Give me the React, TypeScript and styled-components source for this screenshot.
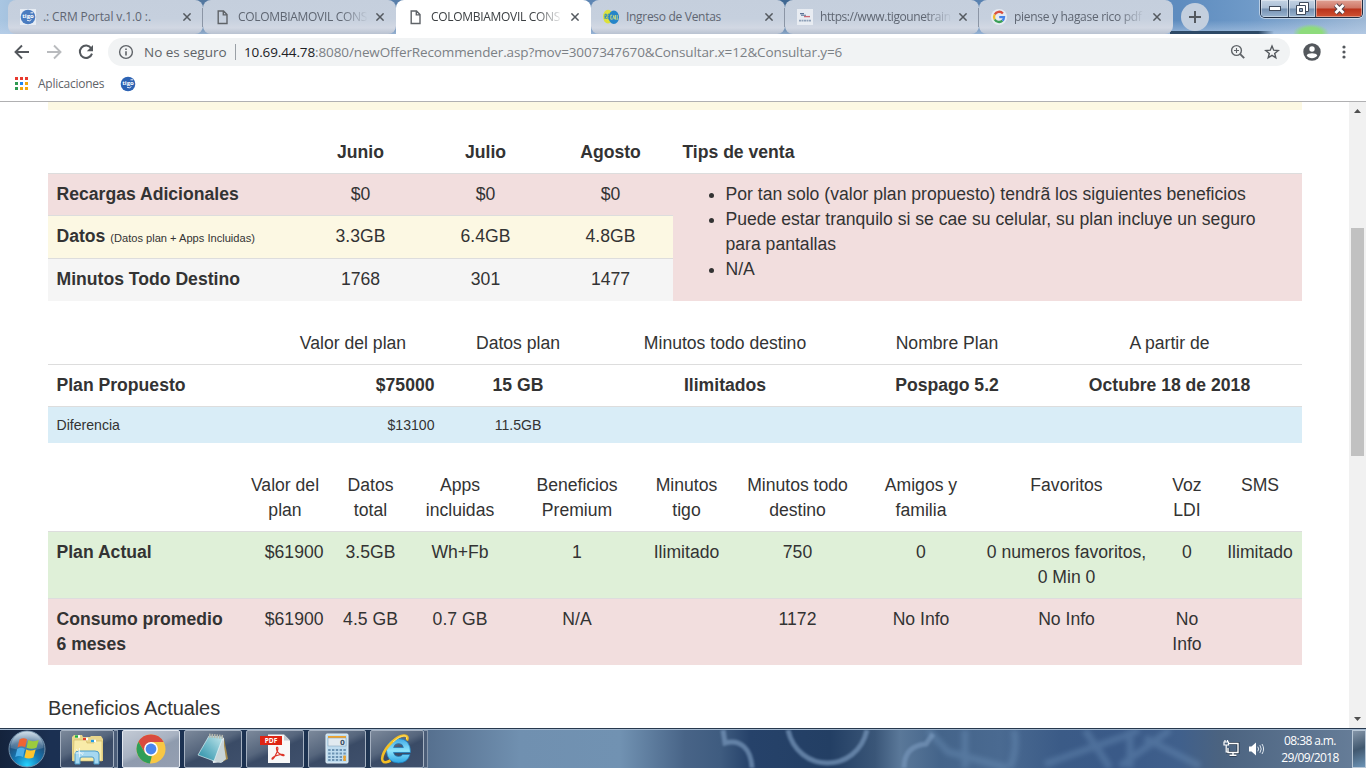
import React from "react";
import styled, { createGlobalStyle } from "styled-components";

const UI = `"Open Sans", "Noto Sans", sans-serif`;

const GlobalStyle = createGlobalStyle`
  * { box-sizing: border-box; }
  html, body { margin: 0; padding: 0; overflow: hidden; background: #fff; }
`;

const Screen = styled.div`
  width: 1366px;
  height: 768px;
  display: flex;
  flex-direction: column;
  overflow: hidden;
  background: #fff;
`;

/* ---------- tab strip ---------- */

const TabStrip = styled.div`
  position: relative;
  height: 34px;
  flex: none;
  display: flex;
  padding-left: 8px;
  background:
    radial-gradient(ellipse 18px 9px at 1311px 33px, #8edb7c 60%, rgba(142, 219, 124, 0) 100%),
    linear-gradient(180deg, rgba(255, 255, 255, 0) 60%, rgba(190, 210, 235, 0.6) 100%),
    linear-gradient(90deg, #a9c6e2 0, #52779f 200px, #5e86b4 600px, #3d658f 800px, #5c85b4 1000px, #5e8cbf 1180px, #6f9ac8 1250px, #9fb9d6 1366px);
`;

const TabShadow = styled.div`
  position: absolute;
  left: 1170px;
  top: 31px;
  width: 104px;
  height: 3px;
  background: linear-gradient(90deg, #2d4966 85%, rgba(45, 73, 102, 0));
  filter: blur(0.7px);
`;

const Tab = styled.div<{ $active?: boolean; $w: number; $line?: boolean }>`
  position: relative;
  width: ${(p) => p.$w}px;
  height: 34px;
  display: flex;
  align-items: center;
  padding: 0 8px 0 12px;
  border-radius: ${(p) => (p.$active ? "8px 8px 0 0" : "8px")};
  background: ${(p) =>
    p.$active ? "#fff" : "linear-gradient(180deg, #c5cfdd 0, #c6d0de 55%, #d2d8e3 82%, #b9c2d1 100%)"};
  color: ${(p) => (p.$active ? "#3c4043" : "#5f6672")};
  &::after {
    content: "";
    display: ${(p) => (p.$line ? "block" : "none")};
    position: absolute;
    right: 0;
    top: 8px;
    width: 1px;
    height: 19px;
    background: #8b95a5;
  }
`;

const TabIcon = styled.div`
  width: 16px;
  height: 16px;
  flex: none;
  display: flex;
  align-items: center;
  justify-content: center;
`;

const TabTitle = styled.div<{ $fade?: boolean; $ls: number }>`
  flex: 1;
  margin-left: 7px;
  white-space: nowrap;
  font: 12px/18px ${UI};
  letter-spacing: ${(p) => p.$ls}px;
  mask-image: ${(p) => (p.$fade ? "linear-gradient(90deg, #000 80%, transparent 101%)" : "none")};
`;

const CloseSlot = styled.div`
  width: 16px;
  height: 16px;
  margin-left: 5px;
  display: flex;
  align-items: center;
  justify-content: center;
`;

const NewTab = styled.div`
  width: 28px;
  height: 28px;
  margin: 3px 0 0 8px;
  border-radius: 50%;
  background: #c3cfde;
  display: flex;
  align-items: center;
  justify-content: center;
`;

const WindowButtons = styled.div`
  position: absolute;
  left: 1260px;
  top: 0;
  width: 103px;
  height: 18px;
  display: flex;
  overflow: hidden;
  border: 1px solid #1f2d42;
  border-top: none;
  border-radius: 0 0 5px 5px;
  box-shadow: 0 0 0 1px rgba(255, 255, 255, 0.5);
`;

const WindowButton = styled.div<{ $w: number; $close?: boolean }>`
  width: ${(p) => p.$w}px;
  display: flex;
  align-items: center;
  justify-content: center;
  border-right: ${(p) => (p.$close ? "none" : "1px solid #34475f")};
  box-shadow: inset 0 0 0 1px rgba(255, 255, 255, 0.4);
  background: ${(p) =>
    p.$close
      ? "linear-gradient(180deg, #e0a194 0, #cf7564 48%, #b9321b 52%, #cf5232 100%)"
      : "linear-gradient(180deg, #c4d3e4 0, #a9bdd4 48%, #7591b2 52%, #9ab4d0 100%)"};
`;

/* ---------- toolbar ---------- */

const Toolbar = styled.div`
  height: 36px;
  flex: none;
  display: flex;
  align-items: center;
  padding: 0 12px 0 12px;
`;

const NavIcon = styled.div<{ $gap: number }>`
  width: 20px;
  height: 20px;
  margin-right: ${(p) => p.$gap}px;
  display: flex;
  align-items: center;
  justify-content: center;
`;

const Omnibox = styled.div`
  width: 1182px;
  height: 28px;
  margin-right: 12px;
  border-radius: 14px;
  background: #f1f3f4;
  display: flex;
  align-items: center;
  padding: 0 8px 0 10px;
  color: #7b8085;
  font: 13.5px/20px ${UI};
`;

const Insecure = styled.span`
  width: 82px;
  margin-left: 10px;
  color: #5f6368;
  white-space: nowrap;
  letter-spacing: 0;
`;

const Divider = styled.i`
  width: 1px;
  height: 16px;
  margin: 0 8px 0 9px;
  background: #9aa0a6;
`;

const Url = styled.span`
  flex: 1;
  white-space: nowrap;
  letter-spacing: -0.12px;
  b { font-weight: 400; color: #202124; }
`;

const Bookmarks = styled.div`
  height: 31px;
  flex: none;
  display: flex;
  align-items: center;
  padding: 0 0 4px 15px;
  font: 12px/18px ${UI};
  color: #5f6368;
`;

const AppsLabel = styled.span`
  width: 82px;
  margin-left: 10px;
  letter-spacing: -0.25px;
`;

/* ---------- page ---------- */

const Viewport = styled.div`
  height: 627px;
  flex: none;
  display: flex;
  overflow: hidden;
  border-top: 1px solid #b0b0b2;
`;

const Page = styled.main`
  width: 1349px;
  padding: 0 47px 0 48px;
  overflow: hidden;
  color: #333;
  font: 17.6px/25px "Liberation Sans", Arial, sans-serif;
`;

const AlertEdge = styled.div`
  height: 8px;
  background: #fcf8e3;
`;

const Table = styled.table<{ $top: number }>`
  width: 1254px;
  margin-top: ${(p) => p.$top}px;
  table-layout: fixed;
  border-collapse: separate;
  border-spacing: 0;
`;

const tones = {
  none: "transparent",
  danger: "#f2dede",
  warning: "#fcf8e3",
  plain: "#f5f5f5",
  info: "#d9edf7",
  success: "#dff0d8",
};

const Row = styled.tr<{ $h: number; $tone?: keyof typeof tones; $small?: boolean }>`
  height: ${(p) => p.$h}px;
  font-size: ${(p) => (p.$small ? "14.1px" : "inherit")};
  line-height: ${(p) => (p.$small ? "20px" : "25px")};
  > td { background: ${(p) => tones[p.$tone ?? "none"]}; }
`;

const Cell = styled.td<{ $align?: string; $bold?: boolean; $head?: boolean; $pad?: number }>`
  padding: ${(p) => (p.$head ? 9 : 8)}px ${(p) => p.$pad ?? 8.5}px 0;
  vertical-align: top;
  text-align: ${(p) => p.$align ?? "center"};
  font-weight: ${(p) => (p.$bold ? 700 : 400)};
  border-top: ${(p) => (p.$head ? "none" : "1px solid #ddd")};
`;

const Note = styled.small`
  font-size: 11.1px;
  font-weight: 400;
`;

const Tips = styled.ul`
  margin: 0;
  padding: 0 0 0 44px;
`;

const Heading = styled.h4`
  margin: 30px 0 0;
  font-size: 20px;
  line-height: 26px;
  font-weight: 400;
  letter-spacing: -0.07px;
`;

const Scrollbar = styled.div`
  width: 17px;
  display: flex;
  flex-direction: column;
  align-items: center;
  background: #f1f1f1;
`;

const ScrollArrow = styled.div<{ $down?: boolean }>`
  height: 17px;
  display: flex;
  align-items: center;
  transform: ${(p) => (p.$down ? "rotate(180deg)" : "none")};
`;

const ScrollTrack = styled.div`
  flex: 1;
  width: 13px;
  padding-top: 109px;
`;

const Thumb = styled.div`
  height: 228px;
  background: #c1c1c1;
`;

/* ---------- taskbar ---------- */

const Taskbar = styled.div`
  position: relative;
  height: 40px;
  flex: none;
  display: flex;
  align-items: center;
  border-top: 1px solid #27384d;
  box-shadow: inset 0 1px 0 #a3b8cf;
  background: linear-gradient(90deg, #14233c 0, #1b3052 50px, #1d3350 366px, #56708f 428px, #7090b0 520px, #7192b2 620px, #486487 685px, #3f5c80 720px, #26426a 750px, #233f64 830px, #3a5678 875px, #5a7899 900px, #44648a 940px, #4a6a91 1000px, #3b5b87 1060px, #3a5a88 1120px, #40608c 1180px, #4b6380 1220px, #687f9a 1366px);
`;

const Gears = styled.svg`
  position: absolute;
  left: 700px;
  top: 1px;
`;

const StartSlot = styled.div`
  position: relative;
  width: 52px;
  margin-left: 8px;
  display: flex;
`;

const TaskButton = styled.div<{ $w: number; $lit?: boolean; $gap?: number }>`
  position: relative;
  width: ${(p) => p.$w}px;
  height: 38px;
  margin-right: ${(p) => p.$gap ?? 4}px;
  display: flex;
  align-items: center;
  justify-content: center;
  border: 1px solid ${(p) => (p.$lit ? "#e2e7ef" : "#a4b0c0")};
  border-radius: 2px;
  background: ${(p) =>
    p.$lit
      ? "linear-gradient(155deg, #c3cad5 0, #a7b1c1 45%, #8f9bae 55%, #959fb1 100%)"
      : "linear-gradient(155deg, #7c899b 0, #56667d 42%, #3a4b66 55%, #3f506c 100%)"};
`;

const StackEdge = styled.div<{ $gap: number }>`
  width: 4px;
  height: 38px;
  margin-right: ${(p) => p.$gap}px;
  border: 1px solid #8797ac;
  border-left: none;
  background: #4b5d78;
`;

const Tray = styled.div`
  position: relative;
  margin-left: auto;
  height: 39px;
  display: flex;
  align-items: center;
  gap: 8px;
`;

const Clock = styled.div`
  width: 62px;
  margin: 0 3px 0 6px;
  color: #fff;
  text-align: center;
  font: 12px/17px ${UI};
  letter-spacing: -0.6px;
  white-space: nowrap;
`;

const ShowDesktop = styled.div`
  width: 14px;
  height: 38px;
  border: 1px solid #b8c7d6;
  background: linear-gradient(160deg, #8495a8, #41586f 50%, #6c93b5);
`;

/* ---------- drawings ---------- */

const TigoIcon = ({ boxed }: { boxed?: boolean }) => (
  <svg width="16" height="16" viewBox="0 0 16 16">
    {boxed && <rect width="16" height="16" fill="#e6ecf4" />}
    <circle cx="8" cy="8" r="7.3" fill={boxed ? "#4a7cc0" : "#2d63b4"} />
    <text x="8" y="9.4" fontSize="6" fontWeight="700" fill="#fff" textAnchor="middle" fontFamily="Open Sans, sans-serif">tigo</text>
    <path d="M7 11.2q2.5 1.6 4.4-.6M10.500 3.800h2.500" stroke="#fff" fill="none" strokeWidth=".9" />
  </svg>
);

const PageIcon = () => (
  <svg width="12" height="15" viewBox="0 0 12 15" fill="none" stroke="#5f6368" strokeWidth="1.4">
    <path d="M1.2 1h5.3l3.5 3.6v8.900H1.200zM6.300 1v3.900h3.700" />
  </svg>
);

const RecallIcon = () => (
  <svg width="16" height="16" viewBox="0 0 16 16">
    <ellipse cx="5" cy="7.6" rx="5" ry="6.8" fill="#dde13b" />
    <ellipse cx="10.8" cy="8.3" rx="5.2" ry="6.8" fill="#2585c9" />
    <path d="M2 10V5.200h1.400v2.300H2l1.600 2.500M6.500 5.200H5v4.700h1.500M5 7.500h1.200" stroke="#2585c9" fill="none" strokeWidth=".9" />
    <path d="M9.300 6.200H7.800v4h1.500M9.800 10.400l1-4 1 4M12.500 6v4.300h1M14.200 6v4.300h1" stroke="#dfe67a" fill="none" strokeWidth=".8" />
  </svg>
);

const UneIcon = () => (
  <svg width="16" height="16" viewBox="0 0 16 16">
    <rect width="16" height="16" fill="#e8ecf2" />
    <path d="M3 4.6h4M4 6.2h5" stroke="#5b7396" strokeWidth="1.1" />
    <path d="M7 7.6h6" stroke="#cf6770" strokeWidth="1.3" />
    <path d="M2 11.6h12" stroke="#8fa1b8" strokeWidth="1.6" strokeDasharray="2 .5" />
  </svg>
);

const GoogleIcon = () => (
  <svg width="16" height="16" viewBox="0 0 16 16">
    <circle cx="8" cy="8" r="8" fill="#e6ebf2" />
    <g fill="none" strokeWidth="2.3">
      <path d="M11.9 4.4A5 5 0 0 0 3.7 5.5" stroke="#d8503f" />
      <path d="M3.7 5.5a5 5 0 0 0 0 5" stroke="#f0bb2c" />
      <path d="M3.7 10.5a5 5 0 0 0 7.7 1.2" stroke="#3a9f57" />
      <path d="M11.4 11.7A5 5 0 0 0 13 8.2H8.2" stroke="#4583e8" />
    </g>
  </svg>
);

const CloseIcon = () => (
  <svg width="8" height="8" viewBox="0 0 8 8" stroke="#54595f" strokeWidth="1.5">
    <path d="M.4.4l7.2 7.2M7.6.4L.4 7.6" />
  </svg>
);

const ArrowIcon = ({ forward }: { forward?: boolean }) => (
  <svg width="16" height="16" viewBox="0 0 16 16" fill="none" stroke={forward ? "#b9bbbe" : "#54585d"} strokeWidth="1.9">
    <path d={forward ? "M1 8h13M8 1.5L14.5 8 8 14.5" : "M15 8H2M8 1.5L1.5 8 8 14.5"} />
  </svg>
);

const ReloadIcon = () => (
  <svg width="16" height="16" viewBox="0 0 16 16">
    <path d="M13.2 4.2A6.2 6.2 0 1 0 14 9.6" fill="none" stroke="#54585d" strokeWidth="2" />
    <path d="M15 1v6.2H8.8z" fill="#54585d" />
  </svg>
);

const InfoIcon = () => (
  <svg width="16" height="16" viewBox="0 0 16 16">
    <circle cx="8" cy="8" r="6.4" fill="none" stroke="#5f6368" strokeWidth="1.4" />
    <path d="M8 7.2v4.3M8 4.4v1.6" stroke="#5f6368" strokeWidth="1.6" />
  </svg>
);

const ZoomIcon = () => (
  <svg width="16" height="16" viewBox="0 0 16 16" fill="none" stroke="#5f6368">
    <circle cx="6.5" cy="6.5" r="4.9" strokeWidth="1.4" />
    <path d="M10.2 10.2l4 4" strokeWidth="1.9" />
    <path d="M4 6.5h5M6.5 4v5" strokeWidth="1.1" />
  </svg>
);

const StarIcon = () => (
  <svg width="16" height="16" viewBox="0 0 16 16">
    <path d="M8 2l1.7 4.2 4.5.3-3.5 2.9 1.1 4.4L8 11.4l-3.8 2.4 1.1-4.4-3.5-2.9 4.5-.3z" fill="none" stroke="#54585d" strokeWidth="1.4" />
  </svg>
);

const UserIcon = () => (
  <svg width="18" height="18" viewBox="0 0 18 18">
    <circle cx="9" cy="9" r="8.7" fill="#54585d" />
    <circle cx="9" cy="6" r="2.7" fill="#fff" />
    <path d="M3.7 12.4c.7-3 9.900-3 10.600 0a6.400 6.400 0 0 1-10.600 0z" fill="#fff" />
  </svg>
);

const DotsIcon = () => (
  <svg width="4" height="14" viewBox="0 0 4 14" fill="#54585d">
    <circle cx="2" cy="2" r="1.6" /><circle cx="2" cy="7" r="1.6" /><circle cx="2" cy="12" r="1.6" />
  </svg>
);

const gridColors = ["#e8392e", "#e8392e", "#e8392e", "#2f9a52", "#1f86f0", "#f2a60d", "#2f9a52", "#f2a60d", "#f2a60d"];
const AppsIcon = () => (
  <svg width="13" height="13" viewBox="0 0 13 13">
    {gridColors.map((c, i) => (
      <rect key={i} x={(i % 3) * 5} y={Math.floor(i / 3) * 5} width="3" height="3" fill={c} />
    ))}
  </svg>
);

const Triangle = () => (
  <svg width="7" height="4" viewBox="0 0 7 4"><path d="M0 4L3.500 0 7 4z" fill="#505050" /></svg>
);

const StartOrb = () => (
  <svg width="38" height="38" viewBox="0 0 38 38">
    <defs>
      <radialGradient id="orb" cx=".5" cy=".95" r=".9">
        <stop offset="0" stopColor="#25d4ff" /><stop offset=".4" stopColor="#1479b5" /><stop offset=".75" stopColor="#224e79" /><stop offset="1" stopColor="#8fa9bf" />
      </radialGradient>
      <linearGradient id="shine" x2="0" y2="1">
        <stop offset="0" stopColor="#d7e4ee" stopOpacity=".85" /><stop offset="1" stopColor="#8aa9c2" stopOpacity=".25" />
      </linearGradient>
    </defs>
    <circle cx="19" cy="19" r="18" fill="url(#orb)" stroke="#7592ab" />
    <path d="M2.500 18a16.500 16.500 0 0 1 33 0q-16 5-33 0z" fill="url(#shine)" />
    <path d="M11.500 9.500q4-2.500 7.500-.2l-1.800 8q-4-2-7.700.2z" fill="#ee6433" />
    <path d="M20.300 10q4 2.300 10.500-.1l-2.300 7.800q-4.800 2.300-10 0z" fill="#9ccc3d" />
    <path d="M9.200 19q4-2.300 7.700 0l-1.900 8q-4-2-7.800 0z" fill="#4aaee8" />
    <path d="M18.200 19.500q4 2.200 9.500 0l-2.300 7.900q-4.600 2.300-9 0z" fill="#fcc52e" />
  </svg>
);

const ExplorerIcon = () => (
  <svg width="34" height="32" viewBox="0 0 34 32">
    <path d="M2 28V4l2-2h8l1 2h7l1-1h10l2 3v22z" fill="#e9d68c" />
    <path d="M4 7h12l1 3h7l1-2h7v20H3z" fill="#f8eba9" stroke="#cfb763" strokeWidth=".6" />
    <path d="M5 3.500h5M13 6h5M21 8h5" stroke="#fff" strokeWidth="2.400" />
    <path d="M5 3.500h3" stroke="#1eae3a" strokeWidth="2.400" />
    <path d="M13 6h3" stroke="#e0412a" strokeWidth="2.400" />
    <path d="M21 8h3" stroke="#229ce0" strokeWidth="2.400" />
    <path d="M5 31V21q0-3 4-3h16q4 0 4 3v10h-5v-5q0-2-2-2H12q-2 0-2 2v5z" fill="#a6d8f0" stroke="#4d9cc8" />
    <path d="M6 16l7 6M5 20h9M9.500 15v9" stroke="#fff" strokeWidth=".8" opacity=".8" />
  </svg>
);

const ChromeIcon = () => (
  <svg width="30" height="30" viewBox="0 0 30 30">
    <circle cx="15" cy="15" r="14.500" fill="#f8c744" />
    <path d="M2.400 7.800A14.500 14.500 0 0 1 27.600 7.900H15L8.800 18.600z" fill="#d94b3f" />
    <path d="M2.400 7.800L8.800 18.600q2.400 3.800 7 3.600L13.900 29.500A14.500 14.500 0 0 1 2.400 7.800z" fill="#2f9e58" />
    <circle cx="15" cy="15" r="6.900" fill="#fff" />
    <circle cx="15" cy="15" r="5.400" fill="#4a86ee" />
  </svg>
);

const NotepadIcon = () => (
  <svg width="32" height="32" viewBox="0 0 32 32">
    <defs><linearGradient id="note" x1="1" y2="1" x2="0"><stop offset="0" stopColor="#c5e8ed" /><stop offset=".5" stopColor="#70b9c9" /><stop offset="1" stopColor="#258ba3" /></linearGradient></defs>
    <path d="M27 5l4 21-6 3z" fill="#a58b4d" />
    <path d="M12 4l15 1-1 24-10 1z" fill="#e7eef0" />
    <path d="M26 6l3 20-5 4-7-2z" fill="#c9d5d8" />
    <path d="M12 3l14 1-9 24-16-6z" fill="url(#note)" stroke="#d9eef2" strokeWidth=".7" />
    <path d="M12 2.500l15 1.500" stroke="#b6b9ae" strokeWidth="4" strokeDasharray="1.500 1" />
  </svg>
);

const PdfIcon = () => (
  <svg width="32" height="32" viewBox="0 0 32 32">
    <path d="M9 1.500h16l6 6V30H9z" fill="#f8f8f8" />
    <path d="M25 1.500l6 6h-6z" fill="#c8cdd3" />
    <rect x="1" y="3" width="22" height="9" fill="#de2413" />
    <text x="12" y="10" fontSize="6.600" fontWeight="700" fill="#fff" textAnchor="middle" fontFamily="Open Sans, sans-serif">PDF</text>
    <path d="M13 26c-1-2 10-6 12-4 1 2-7-1-7.500-6-.3-3 2-2 1.300.6-.8 3.400-4.800 11-5.800 9.400z" fill="none" stroke="#dd3428" strokeWidth="1.200" />
  </svg>
);

const CalcIcon = () => (
  <svg width="24" height="31" viewBox="0 0 24 31">
    <rect x="1" y="1" width="22" height="29" rx="1" fill="#bfdcef" stroke="#e5f1f8" />
    <rect x="3" y="3" width="18" height="2" fill="#f0a32c" />
    <rect x="3" y="5" width="18" height="8" fill="#e1eaf0" stroke="#7b9bb4" strokeWidth=".5" />
    <text x="17.500" y="12" fontSize="7" fontWeight="700" fill="#3c5266" textAnchor="middle" fontFamily="DejaVu Sans, sans-serif">0</text>
    {[17, 20.500, 24, 27].map((y) => (
      <path key={y} d={`M3.200 ${y}h17.600`} stroke="#6c93b3" strokeWidth="2" strokeDasharray="2.400 1.400" />
    ))}
    <rect x="18.400" y="22.500" width="2.400" height="5.500" fill="#f0a32c" />
  </svg>
);

const IeIcon = () => (
  <svg width="34" height="32" viewBox="0 0 34 32">
    <defs><linearGradient id="ie" x2="0" y2="1"><stop offset="0" stopColor="#3ea8e5" /><stop offset=".5" stopColor="#8ee4fb" /><stop offset="1" stopColor="#2aa4e3" /></linearGradient></defs>
    <path d="M30.500 19.500H13.500q.7 4 5 4 3 0 4.200-2H30q-2.500 8.500-11.500 8.500Q7 29.500 6.500 17.500 7 6 18.500 5.500q12 .5 12 14zM13.600 14.500h9.800q-.5-4-4.900-4-4.200 0-4.900 4z" fill="url(#ie)" stroke="#1b7cbd" strokeWidth=".7" />
    <path d="M27 7.500C30 1 21 0 12 9 2 18.500-1 30 6 29.200q2-.3 4.500-1.700" fill="none" stroke="#f4be25" strokeWidth="2.600" />
    <path d="M26.500 6C28 1.500 21 1.500 13 9" fill="none" stroke="#ffe675" strokeWidth="1" />
  </svg>
);

const GearsArt = () => (
  <Gears width="540" height="38" viewBox="0 0 540 38">
    <g fill="none" stroke="#7493b7" strokeWidth="5" opacity=".75" style={{ filter: "blur(1px)" }}>
      <path d="M23 0l2 13C40 9 51 18 52 38" />
      <path d="M88 0C98 44 157 44 167 0" />
      <path d="M204 38q0-22 22-24l7-10" />
    </g>
    <g fill="none" stroke="#7ba1c8" strokeWidth="7" opacity=".3" style={{ filter: "blur(2.5px)" }}>
      <path d="M228 0l20 22 60 16M265 0v38M314 0q4 18-4 38M345 34l80-28 14-6M385 0l25 38M430 0v38M445 8l55 28M470 0l-50 36" />
    </g>
  </Gears>
);

const NetworkIcon = () => (
  <svg width="17" height="17" viewBox="0 0 17 17" fill="none" stroke="#fff">
    <path d="M6 3.500h9v9H5V8M10 12.500V15M6.500 15.200h7" stroke="#26364a" strokeWidth="3" />
    <path d="M6 3.500h9v9H5V8M10 12.500V15M6.500 15.200h7" strokeWidth="1.400" />
    <path d="M1 2h4.500v3H1zM2 0v2M4.500 0v2M3.200 5v7h2" strokeWidth="1.200" />
  </svg>
);

const SpeakerIcon = () => (
  <svg width="17" height="14" viewBox="0 0 17 14">
    <path d="M1 4.500h2.500L8 .500v13L3.500 9.500H1z" fill="#fff" />
    <path d="M9.800 4.700q1.600 2.300 0 4.600M11.900 3.200q2.600 3.800 0 7.600M14 2q3.200 5 0 10" fill="none" stroke="#dfe7ef" strokeWidth="1" />
  </svg>
);

type TabData = { icon: React.ReactNode; title: string; w: number; ls: number; active?: boolean; fade?: boolean; line?: boolean };
const tabs: TabData[] = [
  { icon: <TigoIcon boxed />, title: ".: CRM Portal v.1.0 :.", w: 195, ls: -0.1, line: true },
  { icon: <PageIcon />, title: "COLOMBIAMOVIL CONS", w: 193, ls: -0.3, fade: true },
  { icon: <PageIcon />, title: "COLOMBIAMOVIL CONS", w: 195, ls: -0.3, fade: true, active: true },
  { icon: <RecallIcon />, title: "Ingreso de Ventas", w: 194, ls: -0.3, line: true },
  { icon: <UneIcon />, title: "https://www.tigounetrain", w: 194, ls: -0.42, fade: true, line: true },
  { icon: <GoogleIcon />, title: "piense y hagase rico pdf", w: 194, ls: -0.3, fade: true },
];

const Columns = ({ widths }: { widths: number[] }) => (
  <colgroup>{widths.map((w, i) => <col key={i} style={{ width: w }} />)}</colgroup>
);

export default function App() {
  return (
    <>
      <GlobalStyle />
      <Screen>
        <TabStrip>
          <TabShadow />
          {tabs.map((t, i) => (
            <Tab key={i} $w={t.w} $active={t.active} $line={t.line}>
              <TabIcon>{t.icon}</TabIcon>
              <TabTitle $fade={t.fade} $ls={t.ls}>{t.title}</TabTitle>
              <CloseSlot><CloseIcon /></CloseSlot>
            </Tab>
          ))}
          <NewTab>
            <svg width="12" height="12" viewBox="0 0 12 12" stroke="#54595f" strokeWidth="2"><path d="M0 6h12M6 0v12" /></svg>
          </NewTab>
          <WindowButtons>
            <WindowButton $w={28}>
              <svg width="12" height="5"><rect x=".5" y=".5" width="11" height="4" fill="#fff" stroke="#404b5c" /></svg>
            </WindowButton>
            <WindowButton $w={27}>
              <svg width="13" height="13" viewBox="0 0 13 13" fill="#fff" stroke="#404b5c">
                <path d="M3.500.500h9v9h-9z" /><path d="M.500 3.500h9v9h-9z" /><path d="M3.500 6.500h3v3h-3z" fill="#8ea5c0" />
              </svg>
            </WindowButton>
            <WindowButton $w={46} $close>
              <svg width="13" height="12" viewBox="0 0 13 12"><path d="M2.500 2l8 8M10.500 2l-8 8" stroke="#52434a" strokeWidth="4.600" /><path d="M2.500 2l8 8M10.500 2l-8 8" stroke="#fff" strokeWidth="2.800" /></svg>
            </WindowButton>
          </WindowButtons>
        </TabStrip>

        <Toolbar>
          <NavIcon $gap={12}><ArrowIcon /></NavIcon>
          <NavIcon $gap={12}><ArrowIcon forward /></NavIcon>
          <NavIcon $gap={12}><ReloadIcon /></NavIcon>
          <Omnibox>
            <InfoIcon />
            <Insecure>No es seguro</Insecure>
            <Divider />
            <Url><b>10.69.44.78</b>:8080/newOfferRecommender.asp?mov=3007347670&amp;Consultar.x=12&amp;Consultar.y=6</Url>
            <NavIcon $gap={14}><ZoomIcon /></NavIcon>
            <NavIcon $gap={0}><StarIcon /></NavIcon>
          </Omnibox>
          <NavIcon $gap={12}><UserIcon /></NavIcon>
          <NavIcon $gap={0}><DotsIcon /></NavIcon>
        </Toolbar>

        <Bookmarks>
          <AppsIcon />
          <AppsLabel>Aplicaciones</AppsLabel>
          <TigoIcon />
        </Bookmarks>

        <Viewport>
          <Page>
            <AlertEdge />
            <Table $top={21}>
              <Columns widths={[250, 125, 125, 125, 629]} />
              <tbody>
                <Row $h={42}>
                  <Cell $head />
                  {["Junio", "Julio", "Agosto"].map((m) => <Cell key={m} $head $bold>{m}</Cell>)}
                  <Cell $head $bold $align="left" $pad={9.4}>Tips de venta</Cell>
                </Row>
                <Row $h={42} $tone="danger">
                  <Cell $align="left" $bold>Recargas Adicionales</Cell>
                  <Cell>$0</Cell><Cell>$0</Cell><Cell>$0</Cell>
                  <Cell rowSpan={3} $align="left">
                    <Tips>
                      <li>Por tan solo (valor plan propuesto) tendrã los siguientes beneficios</li>
                      <li>Puede estar tranquilo si se cae su celular, su plan incluye un seguro<br />para pantallas</li>
                      <li>N/A</li>
                    </Tips>
                  </Cell>
                </Row>
                <Row $h={43} $tone="warning">
                  <Cell $align="left" $bold>Datos <Note>(Datos plan + Apps Incluidas)</Note></Cell>
                  <Cell>3.3GB</Cell><Cell>6.4GB</Cell><Cell>4.8GB</Cell>
                </Row>
                <Row $h={43} $tone="plain">
                  <Cell $align="left" $bold>Minutos Todo Destino</Cell>
                  <Cell>1768</Cell><Cell>301</Cell><Cell>1477</Cell>
                </Row>
              </tbody>
            </Table>

            <Table $top={21}>
              <Columns widths={[215, 180, 150, 264, 180, 265]} />
              <tbody>
                <Row $h={42}>
                  <Cell $head />
                  {["Valor del plan", "Datos plan", "Minutos todo destino", "Nombre Plan", "A partir de"].map((h) => <Cell key={h} $head>{h}</Cell>)}
                </Row>
                <Row $h={42}>
                  <Cell $bold $align="left">Plan Propuesto</Cell>
                  <Cell $bold $align="right">$75000</Cell>
                  {["15 GB", "Ilimitados", "Pospago 5.2", "Octubre 18 de 2018"].map((h) => <Cell key={h} $bold>{h}</Cell>)}
                </Row>
                <Row $h={37} $tone="info" $small>
                  <Cell $align="left">Diferencia</Cell>
                  <Cell $align="right">$13100</Cell>
                  <Cell>11.5GB</Cell><Cell /><Cell /><Cell />
                </Row>
              </tbody>
            </Table>

            <Table $top={21}>
              <Columns widths={[190, 94, 77, 102, 132, 87, 135, 112, 179, 62, 84]} />
              <tbody>
                <Row $h={67}>
                  <Cell $head />
                  {["Valor del plan", "Datos total", "Apps incluidas", "Beneficios Premium", "Minutos tigo", "Minutos todo destino", "Amigos y familia", "Favoritos", "Voz LDI", "SMS"].map((h) => <Cell key={h} $head>{h}</Cell>)}
                </Row>
                <Row $h={67} $tone="success">
                  <Cell $bold $align="left">Plan Actual</Cell>
                  <Cell $align="right">$61900</Cell>
                  {["3.5GB", "Wh+Fb", "1", "Ilimitado", "750", "0", "0 numeros favoritos, 0 Min 0", "0", "Ilimitado"].map((v, i) => <Cell key={i} $pad={6}>{v}</Cell>)}
                </Row>
                <Row $h={67} $tone="danger">
                  <Cell $bold $align="left">Consumo promedio 6 meses</Cell>
                  <Cell $align="right">$61900</Cell>
                  {["4.5 GB", "0.7 GB", "N/A", "", "1172", "No Info", "No Info", "No Info", ""].map((v, i) => <Cell key={i}>{v}</Cell>)}
                </Row>
              </tbody>
            </Table>
            <Heading>Beneficios Actuales</Heading>
          </Page>
          <Scrollbar>
            <ScrollArrow><Triangle /></ScrollArrow>
            <ScrollTrack><Thumb /></ScrollTrack>
            <ScrollArrow $down><Triangle /></ScrollArrow>
          </Scrollbar>
        </Viewport>

        <Taskbar>
          <GearsArt />
          <StartSlot><StartOrb /></StartSlot>
          <TaskButton $w={54} $gap={0}><ExplorerIcon /></TaskButton>
          <StackEdge $gap={4} />
          <TaskButton $w={58} $lit><ChromeIcon /></TaskButton>
          <TaskButton $w={58}><NotepadIcon /></TaskButton>
          <TaskButton $w={58}><PdfIcon /></TaskButton>
          <TaskButton $w={58}><CalcIcon /></TaskButton>
          <TaskButton $w={54} $gap={0}><IeIcon /></TaskButton>
          <StackEdge $gap={0} />
          <Tray>
            <NetworkIcon />
            <SpeakerIcon />
            <Clock>08:38 a.m.<br />29/09/2018</Clock>
            <ShowDesktop />
          </Tray>
        </Taskbar>
      </Screen>
    </>
  );
}
